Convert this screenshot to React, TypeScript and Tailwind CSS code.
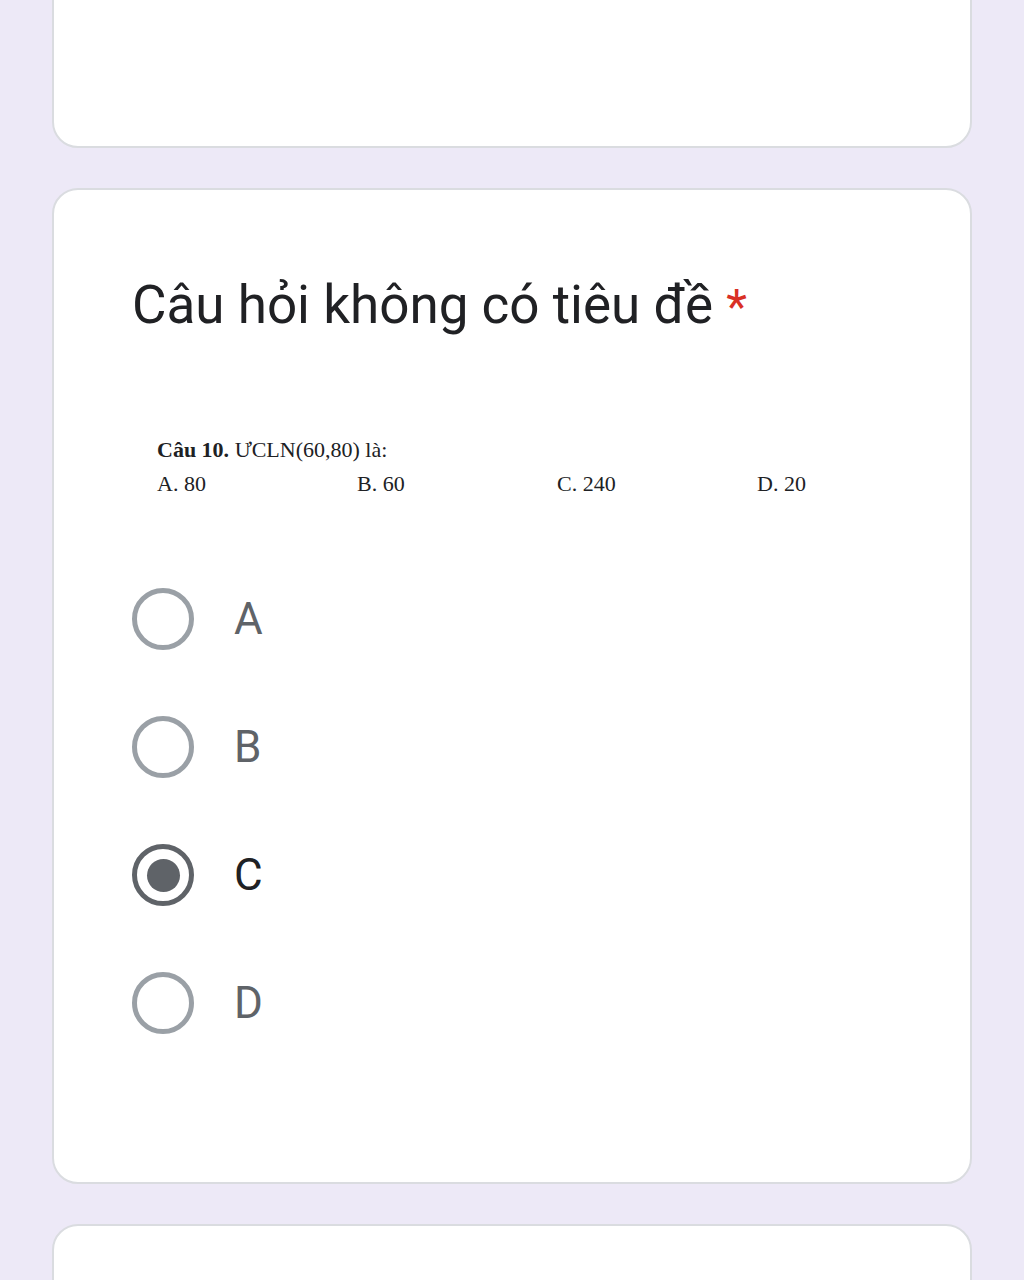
const options = ['A', 'B', 'C', 'D'];
const selected = 'C';

function Radio({ checked }: { checked: boolean }) {
    return (
        <div
            className={`flex h-[62px] w-[62px] shrink-0 items-center justify-center rounded-full border-[5px] ${
                checked ? 'border-[#5f6368]' : 'border-[#9aa0a6]'
            }`}
        >
            {checked && <div className="h-[33px] w-[33px] rounded-full bg-[#5f6368]" />}
        </div>
    );
}

export default function App() {
    return (
        <div className="h-[1280px] overflow-hidden bg-[#ede9f7] px-[52px] font-['Roboto',sans-serif]">
            {/* previous question, cut off at the top */}
            <div className="-mt-[60px] h-[208px] rounded-[26px] border-2 border-[#dadce0] bg-white" />

            {/* this question */}
            <section className="mt-[40px] h-[996px] rounded-[26px] border-2 border-[#dadce0] bg-white pl-[78px] pt-[83px]">
                <h2 className="text-[53px] leading-[64px] text-[#202124]">
                    Câu hỏi không có tiêu đề <span className="text-[48px] text-[#d93025]">*</span>
                </h2>

                <div className="ml-[25px] mt-[94px] font-['Liberation_Serif',serif] text-[22px] leading-[34px] text-[#202124]">
                    <p>
                        <b>Câu 10.</b> ƯCLN(60,80) là:
                    </p>
                    <div className="grid w-[800px] grid-cols-4">
                        <span>A. 80</span>
                        <span>B. 60</span>
                        <span>C. 240</span>
                        <span>D. 20</span>
                    </div>
                </div>

                <div className="mt-[87px] flex flex-col gap-[66px]">
                    {options.map((o) => (
                        <label key={o} className="flex items-center gap-[40px]">
                            <Radio checked={o === selected} />
                            <span
                                className={`text-[44px] leading-[62px] ${
                                    o === selected ? 'text-[#202124]' : 'text-[#5f6368]'
                                }`}
                            >
                                {o}
                            </span>
                        </label>
                    ))}
                </div>
            </section>

            {/* next question */}
            <div className="mt-[40px] h-[200px] rounded-[26px] border-2 border-[#dadce0] bg-white" />
        </div>
    );
}
